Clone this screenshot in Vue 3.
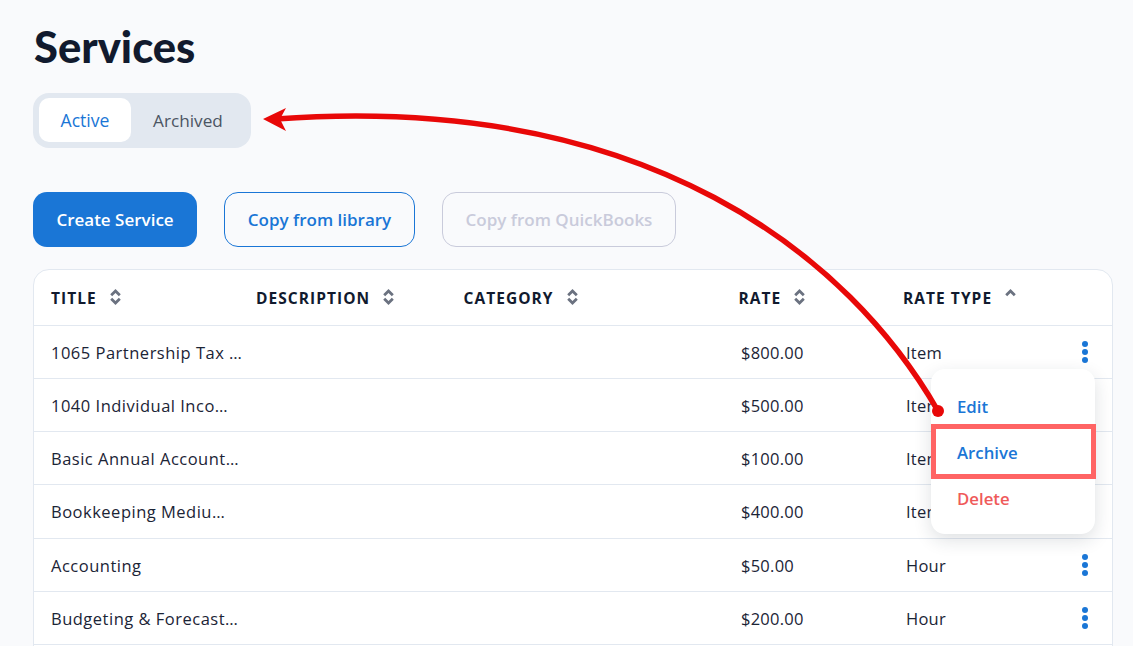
<script setup>
const sorts = [
  { label: 'TITLE', dir: 'both' },
  { label: 'DESCRIPTION', dir: 'both' },
  { label: 'CATEGORY', dir: 'both' },
  { label: 'RATE', dir: 'both' },
  { label: 'RATE TYPE', dir: 'up' },
]
const rows = [
  { title: '1065 Partnership Tax …', rate: '$800.00', type: 'Item', kebab: true },
  { title: '1040 Individual Inco…', rate: '$500.00', type: 'Item', kebab: false },
  { title: 'Basic Annual Account…', rate: '$100.00', type: 'Item', kebab: false },
  { title: 'Bookkeeping Mediu…', rate: '$400.00', type: 'Item', kebab: false },
  { title: 'Accounting', rate: '$50.00', type: 'Hour', kebab: true },
  { title: 'Budgeting & Forecast…', rate: '$200.00', type: 'Hour', kebab: true },
]
</script>

<template>
  <div class="page">
    <h1 class="title">Services</h1>
    <div class="tabs">
      <button class="tab active">Active</button>
      <button class="tab">Archived</button>
    </div>
    <div class="actions">
      <button class="btn primary">Create Service</button>
      <button class="btn outline">Copy from library</button>
      <button class="btn disabled">Copy from QuickBooks</button>
    </div>
    <div class="table">
      <div class="row head">
        <div v-for="s in sorts" :key="s.label" class="th">
          <span>{{ s.label }}</span>
          <svg class="sort" width="11" height="16" viewBox="0 0 11 16">
            <path d="M1.2 6.2 L5.5 2 L9.8 6.2" fill="none" stroke="#6b7280" stroke-width="2.8" />
            <path v-if="s.dir === 'both'" d="M1.2 9.8 L5.5 14 L9.8 9.8" fill="none" stroke="#6b7280" stroke-width="2.8" />
          </svg>
        </div>
      </div>
      <div v-for="r in rows" :key="r.title" class="row body">
        <div class="td name">{{ r.title }}</div>
        <div class="td"></div>
        <div class="td"></div>
        <div class="td rate">{{ r.rate }}</div>
        <div class="td type">{{ r.type }}</div>
        <div class="kebab-cell">
          <svg v-if="r.kebab" width="8" height="24" viewBox="0 0 8 24">
            <circle cx="4" cy="4" r="3" fill="#1a76d6" />
            <circle cx="4" cy="12" r="3" fill="#1a76d6" />
            <circle cx="4" cy="20" r="3" fill="#1a76d6" />
          </svg>
        </div>
      </div>
    </div>
    <div class="menu">
      <div class="item blue">Edit</div>
      <div class="item blue">Archive</div>
      <div class="item red">Delete</div>
    </div>
    <div class="hl"></div>
    <svg class="arrow" width="1133" height="646" viewBox="0 0 1133 646">
      <path d="M938 411 C 850 258, 650 92, 276 119" fill="none" stroke="#e80808" stroke-width="5.5" />
      <path d="M263 119 L286 108 L280 119 L286 131 Z" fill="#e80808" />
      <circle cx="938" cy="411" r="6" fill="#e80808" />
    </svg>
  </div>
</template>

<style scoped>
.page {
  position: relative;
  width: 1133px;
  height: 646px;
  overflow: hidden;
  background: #f9fafc;
  padding: 22px 20px 0 33px;
  box-sizing: border-box;
  font-family: "Open Sans", "Noto Sans", sans-serif;
  color: #111827;
}
.title {
  margin: 0 0 0 1px;
  font-family: Lato, sans-serif;
  font-size: 43.5px;
  font-weight: 900;
  line-height: 49px;
  color: #111a2e;
}
.tabs {
  display: inline-flex;
  margin-top: 22px;
  padding: 5px 6px;
  height: 55px;
  box-sizing: border-box;
  background: #e2e8f0;
  border-radius: 16px;
  vertical-align: top;
}
.tab {
  border: 0;
  background: transparent;
  font: inherit;
  font-size: 17.2px;
  color: #4b5563;
  padding: 0;
  height: 44px;
  border-radius: 10px;
  width: 92px;
  white-space: nowrap;
}
.tab.active { background: #fff; color: #1a76d6; font-size: 17.6px; }
.tab:last-child { width: 114px; }
.actions {
  display: flex;
  gap: 27px;
  margin-top: 44px;
}
.btn {
  height: 55px;
  box-sizing: border-box;
  border-radius: 14px;
  font: inherit;
  font-size: 17px;
  font-weight: 600;
  white-space: nowrap;
  background: transparent;
  border: 1px solid transparent;
  padding: 0;
}
.primary { width: 164px; background: #1a76d6; color: #fff; }
.outline { width: 191px; border-color: #1a76d6; color: #1a76d6; }
.disabled { width: 234px; border-color: #c9cbdb; color: #c9cbdb; }
.table {
  margin-top: 22px;
  width: 1080px;
  min-height: 400px;
  background: #fff;
  border: 1px solid #e2e8f0;
  border-radius: 16px 16px 0 0;
  box-sizing: border-box;
}
.row {
  display: grid;
  grid-template-columns: 205px 207.5px 275px 164.5px 1fr 56px;
  align-items: center;
  border-bottom: 1px solid #e2e8f0;
  box-sizing: border-box;
  padding-left: 17px;
}
.head { height: 56px; }
.body { height: 53.15px; font-size: 16.5px; letter-spacing: 0.25px; }
.th {
  display: flex;
  align-items: center;
  gap: 13px;
  font-size: 15.5px;
  font-weight: 700;
  letter-spacing: 1.05px;
  color: #111a2e;
}
.sort { margin-top: -2px; }
.td { white-space: nowrap; color: #1b2436; padding-top: 1px; }
.name { letter-spacing: 0.5px; }
.rate { padding-left: 2.5px; }
.type { padding-left: 3px; }
.kebab-cell { display: flex; justify-content: center; padding-left: 2px; }
.menu {
  position: absolute;
  left: 931px;
  top: 369px;
  width: 164px;
  height: 165px;
  box-sizing: border-box;
  padding-top: 15px;
  background: #fff;
  border-radius: 14px;
  box-shadow: 0 6px 18px rgba(30, 41, 59, 0.14);
}
.item {
  height: 46px;
  line-height: 46px;
  padding-left: 26px;
  font-size: 16.8px;
  font-weight: 600;
}
.blue { color: #1a76d6; }
.red { color: #ef5a5a; }
.hl {
  position: absolute;
  left: 931px;
  top: 424px;
  width: 165px;
  height: 55px;
  box-sizing: border-box;
  border: 5px solid #ff6464;
}
.arrow { position: absolute; left: 0; top: 0; pointer-events: none; }
</style>
